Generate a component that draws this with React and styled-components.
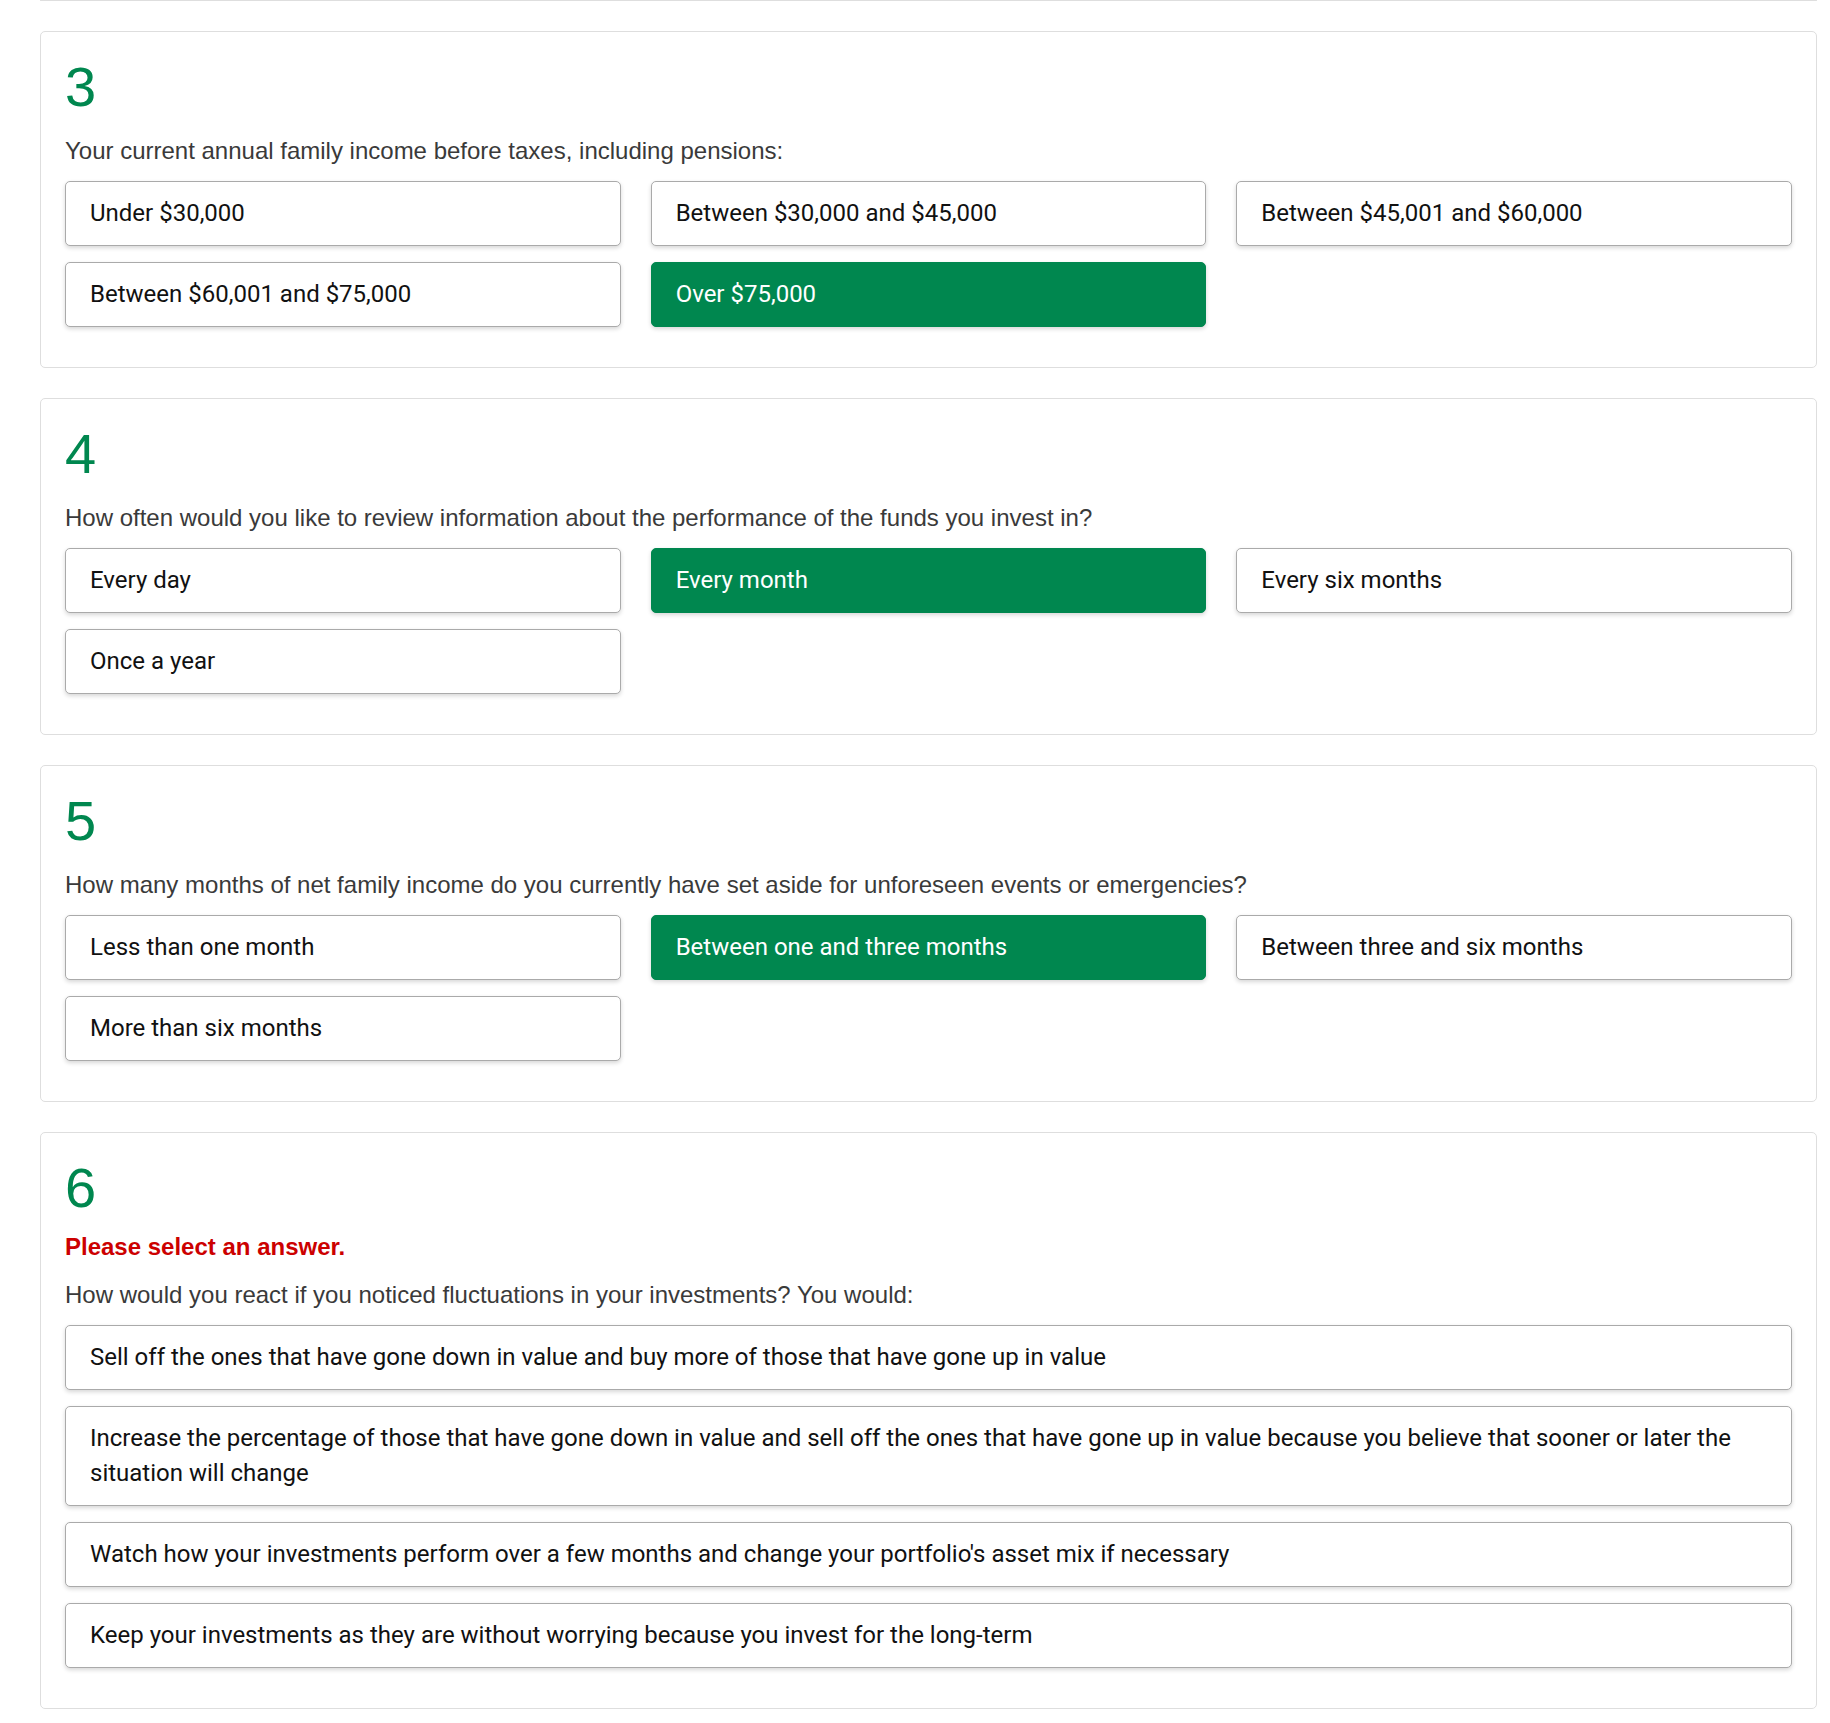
import React from 'react';
import styled, { createGlobalStyle } from 'styled-components';

const GlobalStyle = createGlobalStyle`
  body {
    margin: 0;
    background: #fff;
    font-family: 'Liberation Sans', Arial, sans-serif;
  }
`;

const GREEN = '#00874f';

const Page = styled.div`
  width: 1777px;
  padding-left: 40px;
  display: flex;
  flex-direction: column;
  gap: 30px;
`;

const CardTail = styled.div`
  height: 0;
  border: 1px solid #dedede;
  border-top: none;
  border-radius: 0 0 5px 5px;
`;

const Card = styled.section`
  border: 1px solid #dedede;
  border-radius: 5px;
  padding: 24px;
  background: #fff;
`;

const Number = styled.div`
  font-family: 'Liberation Sans', Arial, sans-serif;
  font-size: 56px;
  line-height: 61px;
  color: ${GREEN};
  margin-bottom: 15px;
`;

const Error = styled.div`
  font-size: 24px;
  line-height: 28px;
  font-weight: 700;
  color: #cc0000;
  margin-bottom: 15px;
`;

const Question = styled.p`
  margin: 0 0 12px;
  padding-top: 1px;
  font-size: 24px;
  line-height: 36px;
  color: #3a3a3a;
`;

const Options = styled.div`
  display: grid;
  grid-template-columns: ${(p) => (p.$wide ? '1fr' : 'repeat(3, 1fr)')};
  column-gap: 30px;
`;

const Option = styled.button`
  display: block;
  width: 100%;
  margin: 0 0 16px;
  padding: 14px 24px;
  text-align: left;
  font-family: Roboto, 'Liberation Sans', sans-serif;
  font-size: 24px;
  line-height: 35px;
  color: ${(p) => (p.$selected ? '#fff' : '#111')};
  background: ${(p) => (p.$selected ? GREEN : '#fff')};
  border: 1px solid ${(p) => (p.$selected ? GREEN : '#aaaaaa')};
  border-radius: 5px;
  box-shadow: 0 2px 4px rgba(0, 0, 0, 0.16);
  cursor: pointer;
`;

const questions = [
  {
    n: 3,
    text: 'Your current annual family income before taxes, including pensions:',
    options: [
      'Under $30,000',
      'Between $30,000 and $45,000',
      'Between $45,001 and $60,000',
      'Between $60,001 and $75,000',
      'Over $75,000',
    ],
    selected: 4,
  },
  {
    n: 4,
    text: 'How often would you like to review information about the performance of the funds you invest in?',
    options: ['Every day', 'Every month', 'Every six months', 'Once a year'],
    selected: 1,
  },
  {
    n: 5,
    text: 'How many months of net family income do you currently have set aside for unforeseen events or emergencies?',
    options: [
      'Less than one month',
      'Between one and three months',
      'Between three and six months',
      'More than six months',
    ],
    selected: 1,
  },
  {
    n: 6,
    error: 'Please select an answer.',
    text: 'How would you react if you noticed fluctuations in your investments? You would:',
    wide: true,
    options: [
      'Sell off the ones that have gone down in value and buy more of those that have gone up in value',
      'Increase the percentage of those that have gone down in value and sell off the ones that have gone up in value because you believe that sooner or later the situation will change',
      "Watch how your investments perform over a few months and change your portfolio's asset mix if necessary",
      'Keep your investments as they are without worrying because you invest for the long-term',
    ],
    selected: -1,
  },
];

export default function App() {
  return (
    <>
      <GlobalStyle />
      <Page>
        <CardTail />
        {questions.map((q) => (
          <Card key={q.n}>
            <Number>{q.n}</Number>
            {q.error && <Error>{q.error}</Error>}
            <Question>{q.text}</Question>
            <Options $wide={q.wide}>
              {q.options.map((o, i) => (
                <Option key={o} $selected={i === q.selected}>
                  {o}
                </Option>
              ))}
            </Options>
          </Card>
        ))}
      </Page>
    </>
  );
}
